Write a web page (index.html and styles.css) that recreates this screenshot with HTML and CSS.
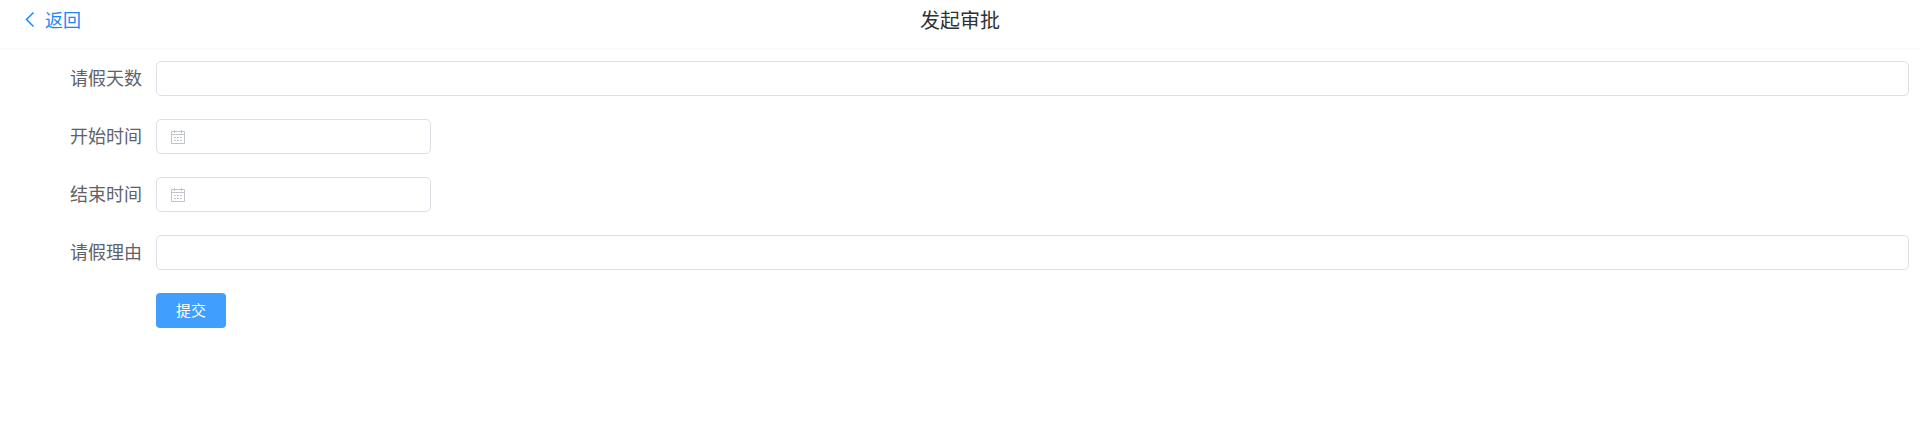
FILE: index.html
```
<!DOCTYPE html>
<html lang="zh-CN">
<head>
    <meta charset="UTF-8">
    <meta name="viewport" content="width=device-width, initial-scale=1.0">
    <title>发起审批</title>
    <link rel="stylesheet" href="styles.css">
</head>
<body>

    <header class="nav-bar">
        <a class="nav-back" href="#">
            <svg class="nav-arrow" viewBox="0 0 10 16" aria-hidden="true"><path d="M8.5 1.5 1.5 8.5l7 7"/></svg>
            返回
        </a>
        <h1 class="nav-title">发起审批</h1>
    </header>

    <form class="form">
        <div class="form-item">
            <label class="form-label" for="days">请假天数</label>
            <input class="input" id="days" type="text">
        </div>
        <div class="form-item">
            <label class="form-label" for="start">开始时间</label>
            <div class="input date-box">
                <svg class="date-icon" viewBox="0 0 14 14" aria-hidden="true">
                    <path d="M.5 1.5h13v12H.5zM.5 4.5h13M3.5 0v3M10.5 0v3M3 7.5h2M6 7.5h2M9 7.5h2M3 10.5h2M6 10.5h2M9 10.5h2"/>
                </svg>
                <input class="date-input" id="start" type="text">
            </div>
        </div>
        <div class="form-item">
            <label class="form-label" for="end">结束时间</label>
            <div class="input date-box">
                <svg class="date-icon" viewBox="0 0 14 14" aria-hidden="true">
                    <path d="M.5 1.5h13v12H.5zM.5 4.5h13M3.5 0v3M10.5 0v3M3 7.5h2M6 7.5h2M9 7.5h2M3 10.5h2M6 10.5h2M9 10.5h2"/>
                </svg>
                <input class="date-input" id="end" type="text">
            </div>
        </div>
        <div class="form-item">
            <label class="form-label" for="reason">请假理由</label>
            <input class="input" id="reason" type="text">
        </div>
        <div class="form-item form-action">
            <button class="btn" type="button">提交</button>
        </div>
    </form>

</body>
</html>
```
FILE: styles.css
```
* {
    margin: 0;
    padding: 0;
    box-sizing: border-box;
}

body {
    background-color: #fff;
    color: #303133;
    font-family: "Noto Sans CJK SC", sans-serif;
}

/* top bar */
.nav-bar {
    display: grid;
    grid-template-columns: 1fr auto 1fr;
    align-items: center;
    height: 50px;
    padding: 0 25px 10px;
    border-bottom: 2px solid #fafafa;
}

.nav-back {
    display: flex;
    align-items: center;
    gap: 10px;
    color: #1989fa;
    font-size: 18px;
    text-decoration: none;
}

.nav-arrow {
    width: 10px;
    height: 16px;
    overflow: visible;
    fill: none;
    stroke: #1989fa;
    stroke-width: 1.5;
}

.nav-title {
    font-size: 20px;
    font-weight: 400;
}

/* form */
.form {
    display: flex;
    flex-direction: column;
    gap: 23px;
    padding: 11px 11px 20px 0;
}

.form-item {
    display: flex;
    align-items: center;
    height: 35px;
}

.form-label {
    width: 156px;
    padding: 0 14px 4px 0;
    color: #606266;
    font-size: 18px;
    line-height: 30px;
    text-align: right;
}

.input {
    flex: 1;
    height: 35px;
    padding: 0 14px;
    border: 1px solid #dcdfe6;
    border-radius: 5px;
    background-color: #fff;
    color: #606266;
    font-size: 15px;
    outline: none;
}

.input:focus,
.date-box:focus-within {
    border-color: #409eff;
}

.date-box {
    display: flex;
    flex: none;
    align-items: center;
    gap: 10px;
    width: 275px;
}

.date-icon {
    width: 14px;
    height: 14px;
    fill: none;
    stroke: #c0c4cc;
}

.date-input {
    flex: 1;
    min-width: 0;
    border: none;
    background: none;
    color: #606266;
    font-size: 15px;
    outline: none;
}

.form-action {
    padding-left: 156px;
}

.btn {
    height: 35px;
    padding: 0 20px 2px;
    border: none;
    border-radius: 4px;
    background-color: #409eff;
    color: #fff;
    font-family: inherit;
    font-size: 15px;
    cursor: pointer;
}

.btn:hover {
    background-color: #66b1ff;
}
```
